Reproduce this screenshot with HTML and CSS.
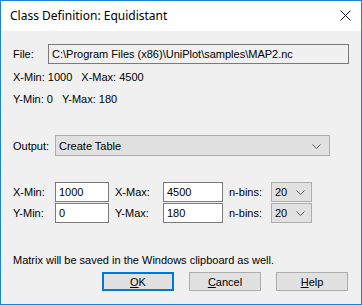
FILE: index.html
```html
<!DOCTYPE html>
<html>
<head>
<meta charset="utf-8">
<link rel="stylesheet" href="styles.css">
</head>
<body>
<div class="window">
  <div class="titlebar">
    <span class="title">Class Definition: Equidistant</span>
    <svg class="close" width="11" height="11" viewBox="0 0 11 11"><path d="M0.5 0.5 L10.5 10.5 M10.5 0.5 L0.5 10.5" stroke="#1a1a1a" stroke-width="1" fill="none"/></svg>
  </div>
  <div class="body">
    <div class="row-file">
      <span class="lbl-file">File:</span>
      <div class="field readonly">C:\Program Files (x86)\UniPlot\samples\MAP2.nc</div>
    </div>
    <div class="info info1"><span>X-Min: 1000</span><span class="sp">X-Max: 4500</span></div>
    <div class="info info2"><span>Y-Min: 0</span><span class="sp">Y-Max: 180</span></div>
    <div class="row-output">
      <span class="lbl-out">Output:</span>
      <div class="combo wide"><span>Create Table</span><svg class="chev" width="9" height="5" viewBox="0 0 9 5"><path d="M0.5 0.5 L4.5 4.5 L8.5 0.5" stroke="#5a5a5a" fill="none"/></svg></div>
    </div>
    <div class="grid">
      <span class="lbl">X-Min:</span>
      <div class="field edit">1000</div>
      <span class="lbl pad">X-Max:</span>
      <div class="field edit">4500</div>
      <span class="lbl pad">n-bins:</span>
      <div class="combo small"><span>20</span><svg class="chev" width="9" height="5" viewBox="0 0 9 5"><path d="M0.5 0.5 L4.5 4.5 L8.5 0.5" stroke="#5a5a5a" fill="none"/></svg></div>
      <span class="lbl">Y-Min:</span>
      <div class="field edit">0</div>
      <span class="lbl pad">Y-Max:</span>
      <div class="field edit">180</div>
      <span class="lbl pad">n-bins:</span>
      <div class="combo small"><span>20</span><svg class="chev" width="9" height="5" viewBox="0 0 9 5"><path d="M0.5 0.5 L4.5 4.5 L8.5 0.5" stroke="#5a5a5a" fill="none"/></svg></div>
    </div>
    <div class="message">Matrix will be saved in the Windows clipboard as well.</div>
    <div class="buttons">
      <div class="btn default"><u>O</u>K</div>
      <div class="btn"><u>C</u>ancel</div>
      <div class="btn"><u>H</u>elp</div>
    </div>
  </div>
</div>
</body>
</html>
```
FILE: styles.css
```css
* { box-sizing: border-box; }
html, body { margin: 0; padding: 0; }
body { width: 362px; height: 305px; overflow: hidden; background: #f0f0f0; }
.window {
  width: 362px; height: 305px;
  border: 1px solid #1883d7;
  background: #f0f0f0;
  display: flex; flex-direction: column;
  font-family: "Liberation Sans", Arial, sans-serif;
  font-size: 11px;
  color: #000;
}
.titlebar {
  height: 30px; background: #fff;
  display: flex; align-items: center; justify-content: space-between;
  padding: 0 10px 0 9px;
}
.title { font-family: "Noto Sans", sans-serif; font-size: 12px; color: #000; margin-top: -1px; }
.close { margin-top: -1px; }
.body { display: flex; flex-direction: column; padding: 0 12px 0 12px; flex: 1; }
.row-file { display: flex; align-items: center; margin-top: 13px; height: 20px; }
.lbl-file { width: 35px; }
.field { height: 20px; border: 1px solid #7a7a7a; background: #fff; padding-left: 3px; line-height: 18px; white-space: nowrap; }
.field.readonly { width: 301px; background: #f0f0f0; }
.info { height: 14px; line-height: 14px; display: flex; }
.info1 { margin-top: 6px; }
.info2 { margin-top: 8px; }
.info .sp { margin-left: 9px; }
.row-output { display: flex; align-items: center; margin-top: 29px; height: 21px; }
.lbl-out { width: 42px; }
.combo { height: 21px; border: 1px solid #adadad; background: #e1e1e1; display: flex; align-items: center; justify-content: space-between; padding: 0 8px 0 3px; }
.combo.wide { width: 275px; }
.combo.small { width: 41px; height: 21px; padding-right: 6px; }
.chev { display: block; margin-top: 1px; }
.grid {
  display: grid;
  grid-template-columns: 42px 54px 54px 60px 48px 41px;
  grid-template-rows: 20px 20px;
  row-gap: 1px;
  margin-top: 26px;
  align-items: center;
}
.grid .field { width: 100%; }
.grid .combo.small { height: 20px; }
.lbl.pad { padding-left: 6px; }
.message { margin-top: 30px; height: 14px; line-height: 14px; }
.buttons { display: flex; justify-content: flex-end; gap: 15px; margin-top: 5px; padding-right: 1px; }
.btn { width: 72px; height: 19px; border: 1px solid #adadad; background: #e1e1e1; display: flex; align-items: center; justify-content: center; }
.btn.default { border: 2px solid #0078d7; }
u { text-decoration: underline; text-underline-offset: 1px; }
```
